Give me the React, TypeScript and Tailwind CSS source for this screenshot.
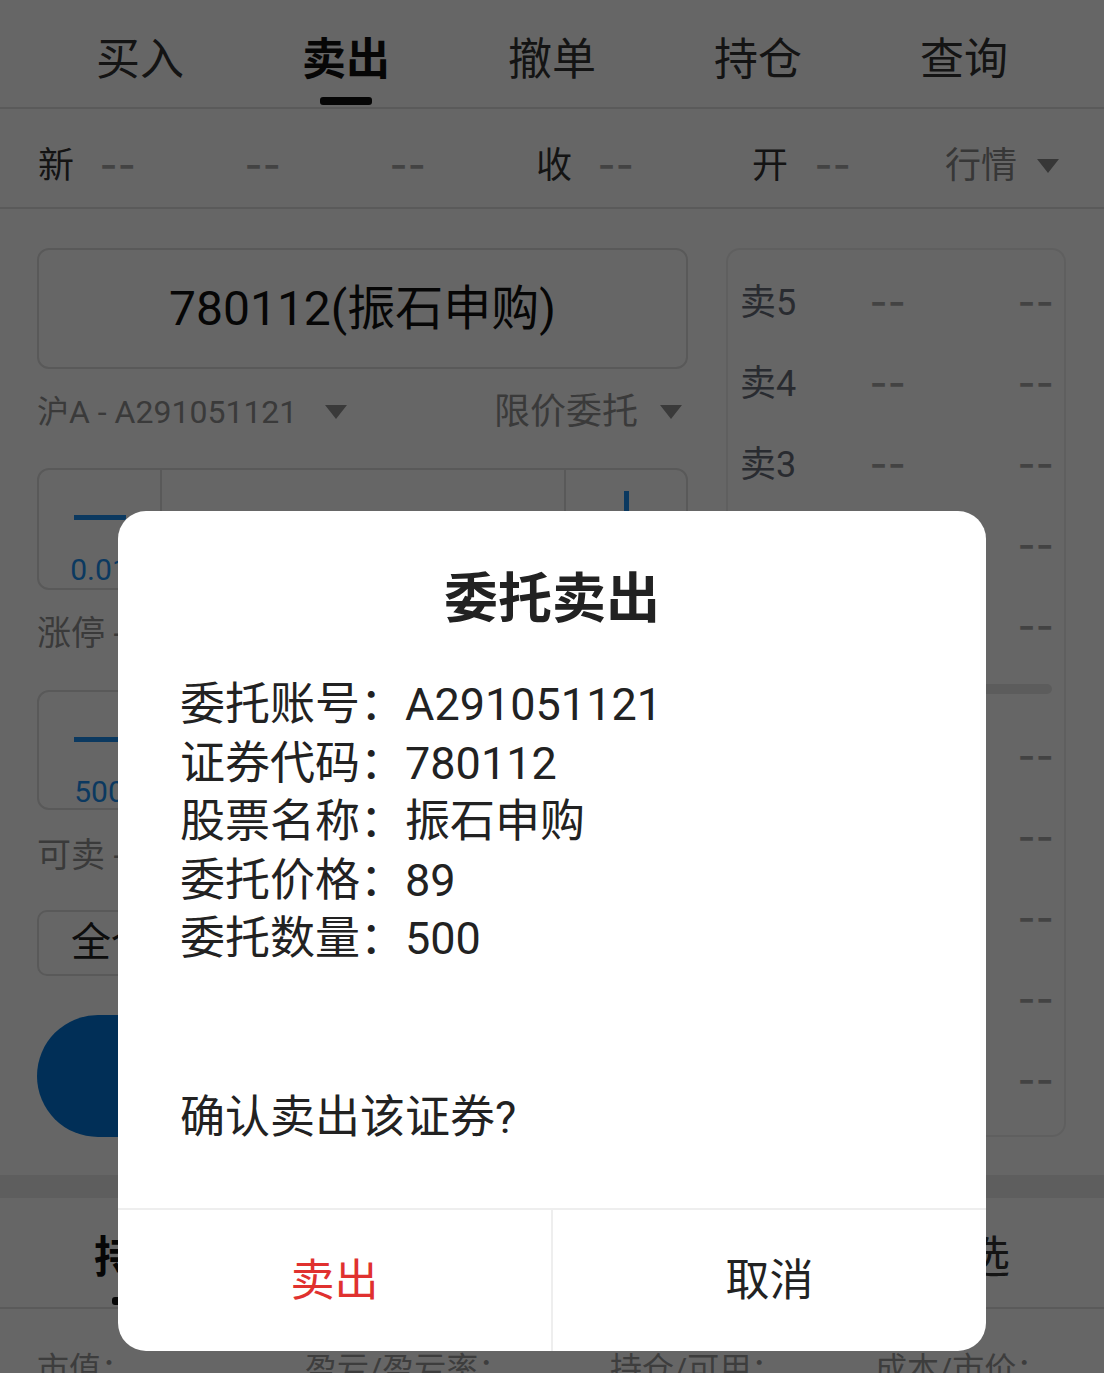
import type { ReactNode } from "react";

const FONT = "font-['Roboto','Noto_Sans_CJK_SC',sans-serif]";

const Caret = ({ className = "" }: { className?: string }) => (
  <svg width="22" height="14" viewBox="0 0 22 14" className={className}>
    <polygon points="0,0 22,0 11,14" fill="currentColor" />
  </svg>
);

// "--" placeholder, stretched to match the wide dashes of the app font
const Dash = ({ className = "" }: { className?: string }) => (
  <span className={`relative -top-[3px] inline-block w-[34px] ${className}`}>
    <span className="inline-block origin-left scale-x-[1.28] font-['Noto_Sans_CJK_SC',sans-serif] font-bold tracking-[1px] text-[#a9a9a9]">
      --
    </span>
  </span>
);

const topTabs = ["买入", "卖出", "撤单", "持仓", "查询"];
const bottomTabs = ["持仓", "委托", "成交", "自选"];

const Stepper = ({ step, value }: { step: string; value: string }) => (
  <div className="flex h-full rounded-[12px] border-2 border-[#dedede]">
    <div className="flex w-[123px] flex-col items-center border-r-2 border-[#dedede]">
      <div className="mt-[45px] h-[5px] w-[52px] shrink-0 bg-[#1c8ff0]" />
      <div className="mt-[30px] text-[30px] leading-[40px] text-[#1c8ff0]">{step}</div>
    </div>
    <div className="flex flex-1 items-center justify-center text-[48px] text-[#222]">{value}</div>
    <div className="relative w-[122px] border-l-2 border-[#dedede]">
      <div className="absolute left-[35px] top-[45px] h-[5px] w-[52px] bg-[#1c8ff0]" />
      <div className="absolute left-[58px] top-[21px] h-[52px] w-[5px] bg-[#1c8ff0]" />
    </div>
  </div>
);

const BookRow = ({ label }: { label: string }) => (
  <div className="flex h-[81px] items-center px-[12px] text-[36px]">
    <span className="w-[130px] text-[#676d79]">{label}</span>
    <Dash />
    <span className="flex-1" />
    <Dash />
  </div>
);

const InfoLine = ({ label, value }: { label: string; value: ReactNode }) => (
  <div className="flex">
    <span>{label}：</span>
    <span>{value}</span>
  </div>
);

export default function App() {
  return (
    <div className={`relative h-[1373px] w-[1104px] overflow-hidden bg-white ${FONT}`}>
      {/* top tabs */}
      <div className="flex h-[109px] border-b-2 border-[#e0e0e0] px-[37px]">
        {topTabs.map((t, i) => (
          <div key={t} className="flex w-[206px] flex-col items-center pt-[30px]">
            <span
              className={`text-[44px] leading-[60px] ${
                i === 1 ? "font-bold text-[#111]" : "text-[#333]"
              }`}
            >
              {t}
            </span>
            {i === 1 && <div className="mt-[7px] h-[8px] w-[52px] rounded-[3px] bg-[#111]" />}
          </div>
        ))}
      </div>

      {/* quote row */}
      <div className="flex h-[100px] items-center border-b-2 border-[#e0e0e0] pl-[38px] pt-[16px] text-[36px] leading-[48px]">
        <span className="w-[62px] text-[#333]">新</span>
        <span className="w-[145px]"><Dash /></span>
        <span className="w-[145px]"><Dash /></span>
        <span className="w-[146px]"><Dash /></span>
        <span className="w-[62px] text-[#333]">收</span>
        <span className="w-[154px]"><Dash /></span>
        <span className="w-[63px] text-[#333]">开</span>
        <span className="w-[130px]"><Dash /></span>
        <span className="text-[#8a8a8a]">行情</span>
        <Caret className="ml-[20px] text-[#8a8a8a]" />
      </div>

      {/* main */}
      <div className="flex gap-[38px] px-[37px] pt-[39px]">
        <div className="flex w-[651px] flex-col">
          <div className="flex h-[121px] items-center justify-center rounded-[12px] border-2 border-[#dedede] text-[48px] text-[#111]">
            780112(振石申购)
          </div>
          <div className="mt-[13px] flex h-[60px] items-center text-[32px] text-[#919191]">
            <span>沪A - A291051121</span>
            <Caret className="ml-[28px]" />
            <span className="flex-1" />
            <span className="text-[36px]">限价委托</span>
            <Caret className="ml-[22px] mr-[6px]" />
          </div>
          <div className="mt-[26px] h-[122px]">
            <Stepper step="0.01" value="89" />
          </div>
          <div className="flex h-[86px] items-center text-[34px] text-[#919191]">
            <span className="w-[326px]">涨停 --</span>
            <span>跌停 --</span>
          </div>
          <div className="mt-[14px] h-[120px]">
            <Stepper step="500" value="500" />
          </div>
          <div className="flex h-[90px] items-center text-[34px] text-[#919191]">可卖 --</div>
          <div className="mt-[10px] flex h-[66px] gap-[20px]">
            {["全仓", "1/2", "1/3", "1/4"].map((b) => (
              <div
                key={b}
                className="flex flex-1 items-center justify-center rounded-[10px] border-2 border-[#dedede] text-[40px] text-[#222]"
              >
                {b}
              </div>
            ))}
          </div>
          <div className="mt-[39px] flex h-[122px] items-center justify-center rounded-full bg-[#0477d9] text-[44px] text-white">
            卖出
          </div>
        </div>

        <div className="flex h-[889px] w-[340px] flex-col rounded-[14px] border-2 border-[#eeeeee] pt-[12px]">
          {["卖5", "卖4", "卖3", "卖2", "卖1"].map((l) => (
            <BookRow key={l} label={l} />
          ))}
          <div className="mx-[12px] mt-[17px] h-[10px] rounded-full bg-[#e6e6e6]" />
          <div className="mt-[22px]">
            {["买1", "买2", "买3", "买4", "买5"].map((l) => (
              <BookRow key={l} label={l} />
            ))}
          </div>
        </div>
      </div>

      {/* separator band */}
      <div className="mt-[38px] h-[23px] bg-[#ebebeb]" />

      {/* bottom tabs */}
      <div className="flex h-[111px] border-b-2 border-[#e0e0e0]">
        {bottomTabs.map((t, i) => (
          <div key={t} className="flex w-[276px] flex-col items-center pt-[30px]">
            <span
              className={`text-[44px] leading-[60px] ${
                i === 0 ? "font-bold text-[#111]" : "text-[#333]"
              }`}
            >
              {t}
            </span>
            {i === 0 && <div className="mt-[9px] h-[8px] w-[52px] rounded-[3px] bg-[#111]" />}
          </div>
        ))}
      </div>

      <div className="flex pl-[37px] pt-[38px] text-[32px] leading-[45px] text-[#999]">
        <span className="w-[268px]">市值：</span>
        <span className="w-[305px]">盈亏/盈亏率：</span>
        <span className="w-[265px]">持仓/可用：</span>
        <span>成本/市价：</span>
      </div>

      {/* dim overlay + dialog */}
      <div className="absolute inset-0 flex justify-center bg-black/60 pt-[511px]">
        <div className="flex h-[840px] w-[868px] flex-col rounded-[28px] bg-white">
          <div className="pt-[52px] text-center text-[54px] font-bold leading-[74px] text-[#222]">
            委托卖出
          </div>
          <div className="mt-[39px] pl-[62px] text-[45px] leading-[58.6px] text-[#222]">
            <InfoLine label="委托账号" value="A291051121" />
            <InfoLine label="证券代码" value="780112" />
            <InfoLine label="股票名称" value="振石申购" />
            <InfoLine label="委托价格" value="89" />
            <InfoLine label="委托数量" value="500" />
          </div>
          <div className="mt-[120px] pl-[62px] text-[45px] leading-[58.6px] text-[#222]">
            确认卖出该证券?
          </div>
          <div className="mt-auto flex h-[143px] border-t-2 border-[#eeeeee]">
            <div className="flex flex-1 items-center justify-center border-r-2 border-[#eeeeee] text-[44px] text-[#e0312f]">
              卖出
            </div>
            <div className="flex flex-1 items-center justify-center text-[44px] text-[#222]">
              取消
            </div>
          </div>
        </div>
      </div>
    </div>
  );
}
